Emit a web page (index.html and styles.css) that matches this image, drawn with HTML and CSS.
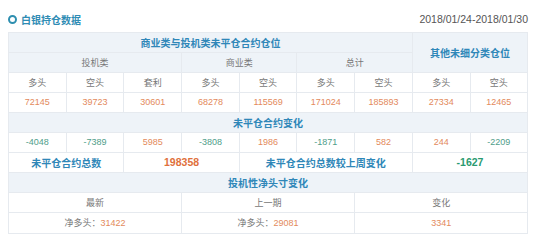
FILE: index.html
```html
<!DOCTYPE html>
<html>
<head>
<meta charset="utf-8">
<link rel="stylesheet" href="styles.css">
</head>
<body>
<div class="page">
  <div class="head">
    <div class="title"><span class="ring"></span><span>白银持仓数据</span></div>
    <div class="date">2018/01/24-2018/01/30</div>
  </div>
  <table class="grid">
    <colgroup>
      <col><col><col><col><col><col><col><col><col>
    </colgroup>
    <tr class="shade">
      <td colspan="7" class="sec">商业类与投机类未平仓合约仓位</td>
      <td colspan="2" rowspan="2" class="sec">其他未细分类仓位</td>
    </tr>
    <tr class="shade">
      <td colspan="3" class="lbl">投机类</td>
      <td colspan="2" class="lbl">商业类</td>
      <td colspan="2" class="lbl">总计</td>
    </tr>
    <tr>
      <td class="lbl">多头</td><td class="lbl">空头</td><td class="lbl">套利</td>
      <td class="lbl">多头</td><td class="lbl">空头</td>
      <td class="lbl">多头</td><td class="lbl">空头</td>
      <td class="lbl">多头</td><td class="lbl">空头</td>
    </tr>
    <tr>
      <td class="up">72145</td><td class="up">39723</td><td class="up">30601</td>
      <td class="up">68278</td><td class="up">115569</td>
      <td class="up">171024</td><td class="up">185893</td>
      <td class="up">27334</td><td class="up">12465</td>
    </tr>
    <tr class="shade">
      <td colspan="9" class="sec">未平仓合约变化</td>
    </tr>
    <tr>
      <td class="down">-4048</td><td class="down">-7389</td><td class="up">5985</td>
      <td class="down">-3808</td><td class="up">1986</td>
      <td class="down">-1871</td><td class="up">582</td>
      <td class="up">244</td><td class="down">-2209</td>
    </tr>
    <tr>
      <td colspan="2" class="sec">未平仓合约总数</td>
      <td colspan="2" class="big up-b">198358</td>
      <td colspan="3" class="sec">未平仓合约总数较上周变化</td>
      <td colspan="2" class="big down-b">-1627</td>
    </tr>
    <tr class="shade">
      <td colspan="9" class="sec">投机性净头寸变化</td>
    </tr>
    <tr>
      <td colspan="3" class="lbl">最新</td>
      <td colspan="3" class="lbl">上一期</td>
      <td colspan="3" class="lbl">变化</td>
    </tr>
    <tr>
      <td colspan="3" class="lbl">净多头：<span class="up">31422</span></td>
      <td colspan="3" class="lbl">净多头：<span class="up">29081</span></td>
      <td colspan="3" class="up">3341</td>
    </tr>
  </table>
</div>
</body>
</html>
```

FILE: styles.css
```css
html, body {
  margin: 0;
  padding: 0;
  background: #ffffff;
}

.page {
  padding: 0 10px 0 8px;
  font-family: "Liberation Sans", "Noto Sans CJK SC", sans-serif;
}

.head {
  display: flex;
  justify-content: space-between;
  align-items: center;
  height: 18px;
  padding-top: 10px;
  margin-bottom: 4px;
}

.title {
  display: flex;
  align-items: center;
  gap: 4px;
  font-size: 10px;
  font-weight: bold;
  color: #2f8cb4;
  font-family: "Noto Sans CJK SC", sans-serif;
}

.ring {
  width: 5px;
  height: 5px;
  border: 2px solid #2e8fb0;
  border-radius: 50%;
}

.date {
  font-size: 10.5px;
  color: #555555;
}

.grid {
  width: 520px;
  border-collapse: collapse;
  table-layout: fixed;
  border: 1px solid #e4e8ed;
}

.grid col {
  width: 57.7px;
}

.grid td {
  height: 19px;
  padding: 0;
  border: 1px solid #e6eaef;
  text-align: center;
  font-size: 9px;
  line-height: 19px;
  white-space: nowrap;
}

.shade td {
  background: #eef3f8;
}

.sec {
  color: #2f87b8;
  font-weight: bold;
  font-size: 10px !important;
  font-family: "Noto Sans CJK SC", sans-serif;
}

.lbl {
  color: #777777;
  font-family: "Noto Sans CJK SC", sans-serif;
}

.up {
  color: #e38a5c;
  font-family: "Liberation Sans", sans-serif;
}

.down {
  color: #4f9e8a;
}

.big {
  font-weight: bold;
  font-size: 10.5px !important;
}

.up-b {
  color: #e0703c;
}

.down-b {
  color: #2a9a70;
}
```
